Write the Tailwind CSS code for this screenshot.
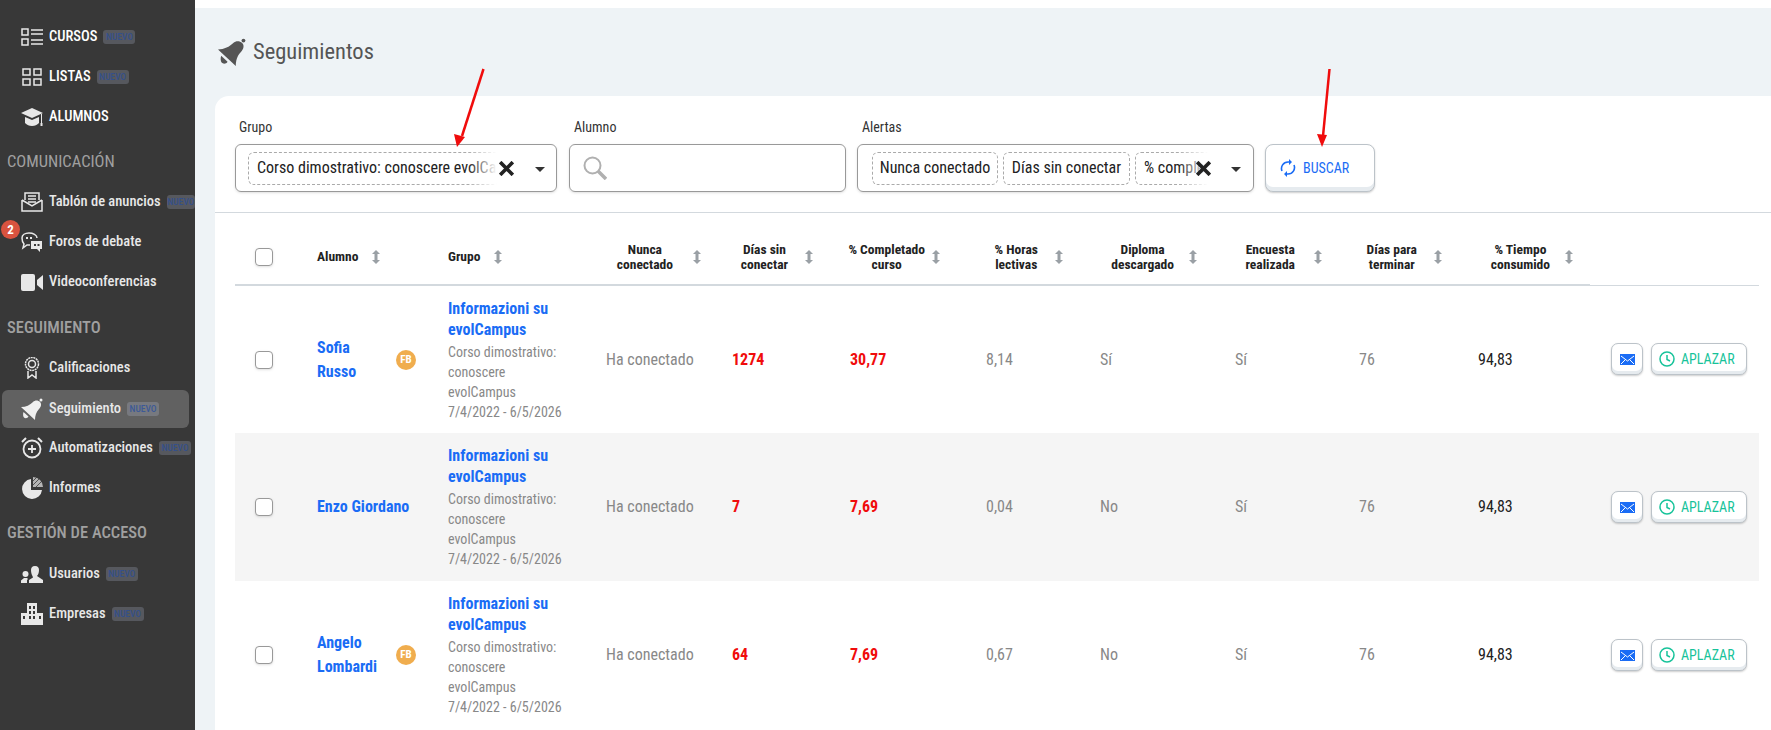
<!DOCTYPE html>
<html lang="es">
<head>
    <meta charset="UTF-8">
    <title>Seguimientos</title>
    <script src="https://cdn.jsdelivr.net/npm/@tailwindcss/browser@4"></script>
</head>
<body class="relative h-[730px] w-[1771px] overflow-hidden flex bg-white font-['Roboto',sans-serif] [font-stretch:87%]">
    <!-- Sidebar -->
    <aside class="w-[195px] shrink-0 bg-[#383838] text-[#e8e8e8] text-[14.5px] font-medium pt-[17px] pl-[2px] whitespace-nowrap">
        <a class="flex items-center h-[40px] pl-[19px] gap-[6px]">
            <svg class="w-[22px] h-[18px] shrink-0" viewBox="0 0 22 18" fill="none" stroke="#e8e8e8" stroke-width="1.5"><rect x="1" y="1" width="6" height="6"/><rect x="1" y="11" width="6" height="6"/><path d="M10 2h12M10 6h12M10 12h12M10 16h12"/></svg>
            <span class="text-white">CURSOS</span>
            <span class="w-[32px] text-center rounded-[3px] bg-[#56585e] text-[#35508a] text-[9.5px] [font-stretch:75%] leading-[14px]">NUEVO</span>
        </a>
        <a class="flex items-center h-[40px] pl-[19px] gap-[6px]">
            <svg class="w-[22px] h-[18px] shrink-0" viewBox="0 0 22 18" fill="none" stroke="#e8e8e8" stroke-width="1.5"><rect x="2" y="1" width="7" height="6"/><rect x="13" y="1" width="7" height="6"/><rect x="2" y="11" width="7" height="6"/><rect x="13" y="11" width="7" height="6"/></svg>
            <span class="text-white">LISTAS</span>
            <span class="w-[32px] text-center rounded-[3px] bg-[#56585e] text-[#35508a] text-[9.5px] [font-stretch:75%] leading-[14px]">NUEVO</span>
        </a>
        <a class="flex items-center h-[40px] pl-[19px] gap-[6px]">
            <svg class="w-[22px] h-[20px] shrink-0" viewBox="0 0 22 20" fill="#e8e8e8"><path d="M11 1 0 6l11 5 11-5z"/><path d="M4 10v6c2 2 4 3 7 3s5-1 7-3v-6l-7 3z"/><rect x="20" y="7" width="1" height="9"/><rect x="19.500" y="16" width="2" height="3"/></svg>
            <span class="text-white">ALUMNOS</span>
        </a>
        <div class="h-[45px] flex items-center pl-[5px] pt-[5px] text-[16.5px] font-normal text-[#a0a0a0]">COMUNICACIÓN</div>
        <a class="flex items-center h-[40px] pl-[19px] gap-[6px]">
            <svg class="w-[22px] h-[20px] shrink-0" viewBox="0 0 22 20" fill="none" stroke="#e8e8e8" stroke-width="1.5"><path d="M4 8V1h14v7M1 8v11h20V8M1 8l10 6 10-6"/><path d="M7 4h8M7 7h8M7 10h8"/></svg>
            <span>Tablón de anuncios</span>
            <span class="w-[32px] text-center rounded-[3px] bg-[#56585e] text-[#35508a] text-[9.5px] [font-stretch:75%] leading-[14px]">NUEVO</span>
        </a>
        <a class="relative flex items-center h-[40px] pl-[19px] gap-[6px]">
            <span class="absolute left-[-1px] top-[-2px] w-[19px] h-[19px] rounded-full bg-[#d9533f] text-white text-[13px] font-bold flex items-center justify-center">2</span>
            <svg class="w-[22px] h-[20px] shrink-0" viewBox="0 0 22 20" fill="none" stroke="#e8e8e8" stroke-width="1.5"><path d="M9 13H6l-4 3 1-4C1 10 1 8 1 6c0-3 3-5 7-5s8 2 8 5"/><path d="M5 5h2v2H5zM9 5h2v2H9z" fill="#e8e8e8" stroke="none"/><path d="M10 9h11v8h-2v3l-3-3h-6z" fill="#e8e8e8" stroke="none"/><path d="M13 12h2v2h-2zM16.500 12h2v2h-2z" fill="#383838" stroke="none"/></svg>
            <span>Foros de debate</span>
        </a>
        <a class="flex items-center h-[40px] pl-[19px] gap-[6px]">
            <svg class="w-[22px] h-[17px] shrink-0" viewBox="0 0 22 17" fill="#e8e8e8"><rect x="0" y="0" width="14" height="17" rx="2"/><path d="M16 6l6-5v15l-6-5z"/></svg>
            <span>Videoconferencias</span>
        </a>
        <div class="h-[46px] flex items-center pl-[5px] pt-[6px] text-[16.5px] font-medium text-[#a0a0a0]">SEGUIMIENTO</div>
        <a class="flex items-center h-[40px] pl-[19px] gap-[6px]">
            <svg class="w-[22px] h-[22px] shrink-0" viewBox="0 0 22 22" fill="none" stroke="#e8e8e8" stroke-width="1.500"><circle cx="11" cy="7" r="6.500" stroke-dasharray="2 .6"/><circle cx="11" cy="7" r="3.500"/><path d="M7 14v7l4-3 4 3v-7"/></svg>
            <span>Calificaciones</span>
        </a>
        <a class="flex items-center h-[38px] mt-[2px] w-[187px] pl-[19px] gap-[6px] rounded-[6px] bg-[#616161]">
            <svg class="w-[22px] h-[22px] shrink-0" viewBox="0 0 22 22" fill="#f0f0f0"><path d="M0 9c5 0 9-2 12-5 2-2 5-2 7 0s1 5-1 7c-3 3-4 7-4 11z"/><path d="M2.500 14l5 4.600c-1 1.900-3.500 1.900-4.500.9s-1.200-3.500-.5-5.500z"/><circle cx="20" cy="2" r="1.500"/></svg>
            <span>Seguimiento</span>
            <span class="w-[32px] text-center rounded-[3px] bg-[#77797f] text-[#3d5a96] text-[9.5px] [font-stretch:75%] leading-[14px]">NUEVO</span>
        </a>
        <a class="flex items-center h-[40px] pl-[19px] gap-[6px]">
            <svg class="w-[22px] h-[22px] shrink-0" viewBox="0 0 22 22" fill="none" stroke="#e8e8e8" stroke-width="1.800"><circle cx="11" cy="12" r="8.500"/><path d="M11 8v8M7 12h8"/><path d="M1 5l4-4M21 5l-4-4" stroke-width="2"/></svg>
            <span>Automatizaciones</span>
            <span class="w-[32px] text-center rounded-[3px] bg-[#56585e] text-[#35508a] text-[9.5px] [font-stretch:75%] leading-[14px]">NUEVO</span>
        </a>
        <a class="flex items-center h-[40px] pl-[19px] gap-[6px]">
            <svg class="w-[22px] h-[22px] shrink-0" viewBox="0 0 22 22" fill="#e8e8e8"><path d="M10 2A10 10 0 1 0 21 13H10z"/><path d="M12 0a10 10 0 0 1 10 10H12z" fill="#b4b4b4"/><path d="M12 4l4-4M12 8l7-7M15 10l7-7" stroke="#383838" stroke-width=".8"/></svg>
            <span>Informes</span>
        </a>
        <div class="h-[46px] flex items-center pl-[5px] pt-[4px] text-[16.5px] font-medium text-[#a0a0a0]">GESTIÓN DE ACCESO</div>
        <a class="flex items-center h-[40px] pl-[19px] gap-[6px]">
            <svg class="w-[22px] h-[17px] shrink-0" viewBox="0 0 22 17" fill="#e8e8e8"><path d="M14 0c3 0 4 2 4 4 0 3-1 5-2 6l6 4v3H8v-3l4-2.500-.5-1.500C10.500 8.500 10 6 10 4c0-2 1-4 4-4z"/><circle cx="4.500" cy="8" r="3"/><path d="M0 17v-2.500L3 12h3l1 1-1 1v3z"/></svg>
            <span>Usuarios</span>
            <span class="w-[32px] text-center rounded-[3px] bg-[#56585e] text-[#35508a] text-[9.5px] [font-stretch:75%] leading-[14px]">NUEVO</span>
        </a>
        <a class="flex items-center h-[40px] pl-[19px] gap-[6px]">
            <svg class="w-[22px] h-[22px] shrink-0" viewBox="0 0 22 22" fill="#e8e8e8"><path d="M6 0h10v22H6z"/><path d="M0 10h6v12H0zM16 10h6v12h-6z"/><path d="M8 3h2v3H8zM12 3h2v3h-2zM8 8h2v3H8zM12 8h2v3h-2zM8 13h2v3H8zM12 13h2v3h-2zM2 13h2v3H2zM18 13h2v3h-2z" fill="#383838"/></svg>
            <span>Empresas</span>
            <span class="w-[32px] text-center rounded-[3px] bg-[#56585e] text-[#35508a] text-[9.5px] [font-stretch:75%] leading-[14px]">NUEVO</span>
        </a>
    </aside>

    <!-- Main -->
    <main class="flex-1 min-w-0 mt-[8px] bg-[#eef3f6]">
        <div class="h-[88px] flex items-center pl-[22px] gap-[6px] pb-[1px]">
            <svg class="w-[30px] h-[28px]" viewBox="0 0 22 22" fill="#555"><path d="M0 9c5 0 9-2 12-5 2-2 5-2 7 0s1 5-1 7c-3 3-4 7-4 11z"/><path d="M2.500 14l5 4.600c-1 1.900-3.500 1.900-4.500.9s-1.200-3.500-.5-5.500z"/><circle cx="20" cy="2" r="1.500"/></svg>
            <h1 class="text-[22.5px] text-[#555]">Seguimientos</h1>
        </div>
        <section class="ml-[20px] bg-white rounded-tl-[14px] h-[640px]">
            <!-- Filters -->
            <div class="h-[117px] border-b border-[#d3d9de] pl-[20px] pt-[21px] flex gap-[11px]">
                <div class="w-[322px] mr-[1px]">
                    <label class="block pl-[4px] text-[14px] leading-[20px] text-[#333] mb-[7px]">Grupo</label>
                    <div class="relative h-[48px] rounded-[6px] border border-[#999] shadow-sm flex items-center pl-[12px]">
                        <div class="w-[252px] h-[33px] border border-dashed border-[#aaa] rounded-[6px] pl-[8px] flex items-center text-[16px] text-[#222] whitespace-nowrap">Corso dimostrativo: conoscere evolCa.</div>
                        <span class="absolute left-[232px] top-[6px] h-[36px] w-[36px] bg-gradient-to-r from-white/0 to-white to-80%"></span>
                        <svg class="absolute left-[263px] top-[16px] w-[15px] h-[15px]" viewBox="0 0 13 13" stroke="#222" stroke-width="3.2"><path d="M1 1l11 11M12 1 1 12"/></svg>
                        <span class="absolute left-[299px] top-[22px] border-x-[5px] border-x-transparent border-t-[5px] border-t-[#333]"></span>
                    </div>
                </div>
                <div class="w-[277px]">
                    <label class="block pl-[5px] text-[14px] leading-[20px] text-[#333] mb-[7px]">Alumno</label>
                    <div class="h-[48px] rounded-[6px] border border-[#999] shadow-sm flex items-center pl-[13px]">
                        <svg class="w-[24px] h-[24px]" viewBox="0 0 24 24" fill="none" stroke="#b0b0b0"><circle cx="9.500" cy="9.500" r="8" stroke-width="2"/><path d="M15 15l8 8" stroke-width="3.500"/></svg>
                    </div>
                </div>
                <div class="w-[397px]">
                    <label class="block pl-[5px] text-[14px] leading-[20px] text-[#333] mb-[7px]">Alertas</label>
                    <div class="relative h-[48px] rounded-[6px] border border-[#999] shadow-sm flex items-center pl-[14px] gap-[5px] text-[16px] text-[#222] whitespace-nowrap">
                        <div class="w-[126px] h-[33px] border border-dashed border-[#aaa] rounded-[6px] flex items-center justify-center">Nunca conectado</div>
                        <div class="w-[127px] h-[33px] border border-dashed border-[#aaa] rounded-[6px] flex items-center justify-center">Días sin conectar</div>
                        <div class="w-[90px] h-[33px] border border-dashed border-[#aaa] rounded-[6px] pl-[8px] flex items-center">% completa</div>
                        <span class="absolute left-[320px] top-[6px] h-[36px] w-[50px] bg-gradient-to-r from-white/0 to-white to-60%"></span>
                        <svg class="absolute left-[338px] top-[16px] w-[15px] h-[15px]" viewBox="0 0 13 13" stroke="#222" stroke-width="3.2"><path d="M1 1l11 11M12 1 1 12"/></svg>
                        <span class="absolute left-[373px] top-[22px] border-x-[5px] border-x-transparent border-t-[5px] border-t-[#333]"></span>
                    </div>
                </div>
                <div class="pt-[27px]">
                    <button class="w-[110px] h-[48px] rounded-[8px] border border-[#bcc3c9] bg-white shadow-[inset_0_-4px_0_#e6ebef,0_1px_2px_rgba(0,0,0,0.2)] flex items-center pl-[14px] gap-[7px] text-[14px] text-[#1a6cf5]">
                        <svg class="w-[16px] h-[18px]" viewBox="0 0 16 18" fill="none" stroke="#1a6cf5" stroke-width="1.600"><path d="M2 12A6.500 6.500 0 0 1 8 3h2M14 6a6.500 6.500 0 0 1-6 9H6"/><path d="M9 0l3 3-3 3zM7 12l-3 3 3 3z" fill="#1a6cf5" stroke="none"/></svg>
                        BUSCAR
                    </button>
                </div>
            </div>

            <!-- Table -->
            <div class="pl-[20px] pr-[12px]">
                <table class="table-fixed w-[1524px] border-collapse">
                    <colgroup>
                        <col class="w-[65px]"><col class="w-[131px]"><col class="w-[158px]"><col class="w-[126px]"><col class="w-[118px]"><col class="w-[136px]"><col class="w-[114px]"><col class="w-[135px]"><col class="w-[124px]"><col class="w-[119px]"><col class="w-[129px]"><col class="w-[169px]">
                    </colgroup>
                    <thead id="thead"></thead>
                    <tbody id="tbody"></tbody>
                </table>
            </div>
        </section>
    </main>

    <!-- Red arrows drawn over the screenshot -->
    <svg class="absolute left-0 top-0 w-[1771px] h-[730px] pointer-events-none" viewBox="0 0 1771 730" fill="#f00c0c">
        <path d="M483.500 69 462 136" stroke="#f00c0c" stroke-width="2.500"/>
        <path d="M457 147l-3-13 11 3z"/>
        <path d="M1329.500 69 1323 136" stroke="#f00c0c" stroke-width="2.500"/>
        <path d="M1322 147l-5-13 10 1z"/>
    </svg>

    <script>
        // Sort arrows used by every header cell
        const sortIcon = `<svg class="w-[8px] h-[14px] shrink-0" viewBox="0 0 8 14" fill="#9aa0a5"><path d="M4 0l4 4H5.500v6H8l-4 4-4-4h2.500V4H0z"/></svg>`;

        // label, gap before the arrows, space right of the arrows
        const headers = [
            ['Alumno', 14, 0],
            ['Grupo', 14, 0],
            ['Nunca<br>conectado', 20, 14],
            ['Días sin<br>conectar', 17, 20],
            ['% Completado<br>curso', 7, 29],
            ['% Horas<br>lectivas', 17, 20],
            ['Diploma<br>descargado', 15, 21],
            ['Encuesta<br>realizada', 19, 20],
            ['Días para<br>terminar', 17, 19],
            ['% Tiempo<br>consumido', 15, 17],
        ];

        let head = `<tr class="h-[72px] text-[13.5px] leading-[15px] font-bold text-[#222]">
            <th class="border-b-2 border-[#d3d9de] pl-[20px] pt-[16px]"><span class="block w-[18px] h-[18px] rounded-[4px] border border-[#999] shadow-sm"></span></th>`;
        headers.forEach((h, i) => {
            if (i < 2) {
                head += `<th class="border-b-2 border-[#d3d9de] pl-[17px] pt-[16px] font-bold"><div class="flex items-center" style="gap:${h[1]}px"><span>${h[0]}</span>${sortIcon}</div></th>`;
            } else {
                head += `<th class="border-b-2 border-[#d3d9de] pt-[16px] font-bold"><div class="flex items-center justify-end" style="padding-right:${h[2]}px;gap:${h[1]}px"><span class="text-center">${h[0]}</span>${sortIcon}</div></th>`;
            }
        });
        head += `<th class="border-b border-[#d3d9de]"></th></tr>`;
        document.getElementById('thead').innerHTML = head;

        const rows = [
            { name: 'Sofia Russo', fb: true, dias: '1274', comp: '30,77', horas: '8,14', dip: 'Sí', bg: 'bg-white' },
            { name: 'Enzo Giordano', fb: false, dias: '7', comp: '7,69', horas: '0,04', dip: 'No', bg: 'bg-[#f5f5f5]' },
            { name: 'Angelo Lombardi', fb: true, dias: '64', comp: '7,69', horas: '0,67', dip: 'No', bg: 'bg-white' },
        ];

        document.getElementById('tbody').innerHTML = rows.map(r => `
            <tr class="h-[148px] ${r.bg} text-[16px] text-[#888]">
                <td class="pl-[20px]"><span class="block w-[18px] h-[18px] rounded-[4px] border border-[#999] bg-white shadow-sm"></span></td>
                <td class="pl-[17px]">
                    <div class="flex items-center justify-between pr-[15px] font-bold text-[#1a6cf5] leading-[24px]">
                        <span class="${r.fb ? 'w-[62px]' : ''}">${r.name}</span>
                        ${r.fb ? '<span class="w-[20px] h-[20px] rounded-full bg-[#f0ad4e] text-white text-[11px] font-bold flex items-center justify-center">FB</span>' : ''}
                    </div>
                </td>
                <td class="pl-[17px]">
                    <div class="w-[120px] font-bold text-[#1a6cf5] leading-[21px]">Informazioni su evolCampus</div>
                    <div class="w-[120px] text-[14px] leading-[20px] mt-[2px]">Corso dimostrativo: conoscere evolCampus<br>7/4/2022 - 6/5/2026</div>
                </td>
                <td class="pl-[17px]">Ha conectado</td>
                <td class="pl-[17px] font-bold text-[#f00c0c]">${r.dias}</td>
                <td class="pl-[17px] font-bold text-[#f00c0c]">${r.comp}</td>
                <td class="pl-[17px]">${r.horas}</td>
                <td class="pl-[17px]">${r.dip}</td>
                <td class="pl-[17px]">Sí</td>
                <td class="pl-[17px]">76</td>
                <td class="pl-[17px] text-[#222]">94,83</td>
                <td class="pl-[21px]">
                    <div class="flex items-center gap-[8px]">
                        <button class="w-[32px] h-[32px] rounded-[7px] border border-[#bcc3c9] bg-white shadow-[inset_0_-3px_0_#e6ebef,0_1px_2px_rgba(0,0,0,0.2)] flex items-center justify-center">
                            <svg class="w-[15px] h-[11px]" viewBox="0 0 15 11"><rect width="15" height="11" fill="#1a6cf5"/><path d="M1 2l6.500 5L14 2M1 10l4-4M14 10l-4-4" fill="none" stroke="#fff"/></svg>
                        </button>
                        <button class="w-[96px] h-[32px] rounded-[7px] border border-[#bcc3c9] bg-white shadow-[inset_0_-3px_0_#e6ebef,0_1px_2px_rgba(0,0,0,0.2)] flex items-center pl-[7px] gap-[6px] text-[14px] text-[#17c39a]">
                            <svg class="w-[16px] h-[16px]" viewBox="0 0 16 16" fill="none" stroke="#17c39a" stroke-width="1.500"><circle cx="8" cy="8" r="7"/><path d="M8 4v4.500l3 1.500"/></svg>
                            APLAZAR
                        </button>
                    </div>
                </td>
            </tr>`).join('');
    </script>
</body>
</html>
